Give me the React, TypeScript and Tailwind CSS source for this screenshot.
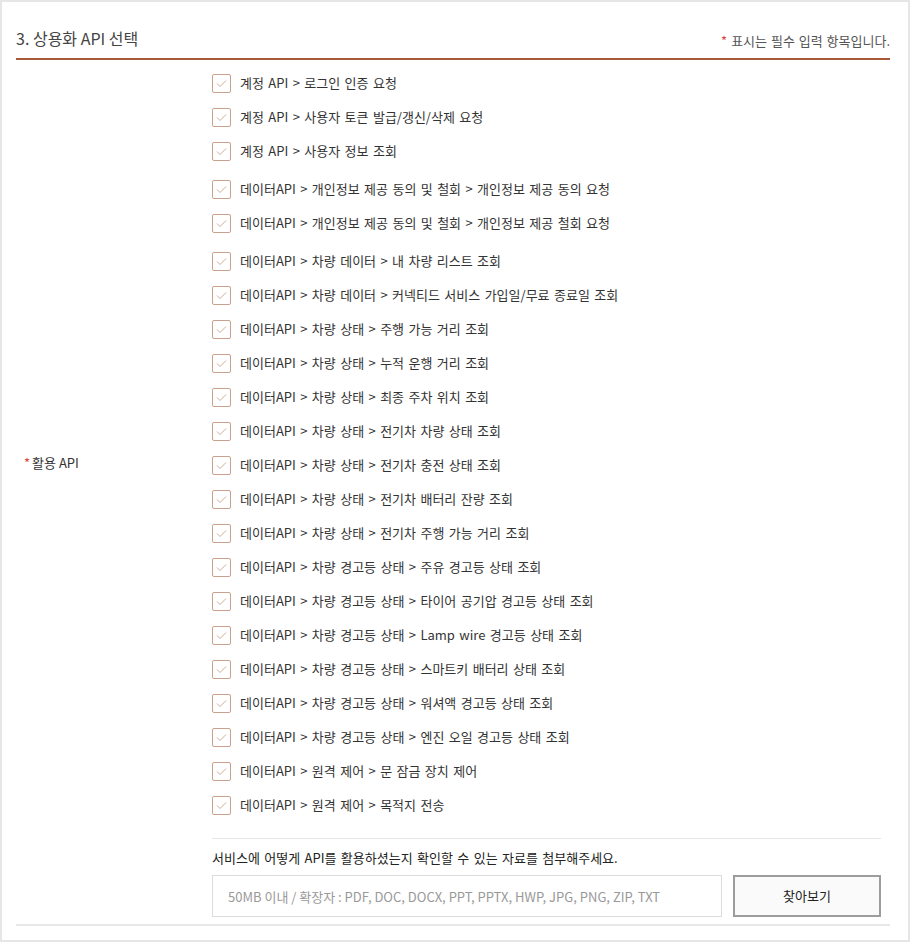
import React from "react";

const groups: string[][] = [
  ["계정 API > 로그인 인증 요청", "계정 API > 사용자 토큰 발급/갱신/삭제 요청", "계정 API > 사용자 정보 조회"],
  [
    "데이터API > 개인정보 제공 동의 및 철회 > 개인정보 제공 동의 요청",
    "데이터API > 개인정보 제공 동의 및 철회 > 개인정보 제공 철회 요청",
  ],
  [
    "데이터API > 차량 데이터 > 내 차량 리스트 조회",
    "데이터API > 차량 데이터 > 커넥티드 서비스 가입일/무료 종료일 조회",
    "데이터API > 차량 상태 > 주행 가능 거리 조회",
    "데이터API > 차량 상태 > 누적 운행 거리 조회",
    "데이터API > 차량 상태 > 최종 주차 위치 조회",
    "데이터API > 차량 상태 > 전기차 차량 상태 조회",
    "데이터API > 차량 상태 > 전기차 충전 상태 조회",
    "데이터API > 차량 상태 > 전기차 배터리 잔량 조회",
    "데이터API > 차량 상태 > 전기차 주행 가능 거리 조회",
    "데이터API > 차량 경고등 상태 > 주유 경고등 상태 조회",
    "데이터API > 차량 경고등 상태 > 타이어 공기압 경고등 상태 조회",
    "데이터API > 차량 경고등 상태 > Lamp wire 경고등 상태 조회",
    "데이터API > 차량 경고등 상태 > 스마트키 배터리 상태 조회",
    "데이터API > 차량 경고등 상태 > 워셔액 경고등 상태 조회",
    "데이터API > 차량 경고등 상태 > 엔진 오일 경고등 상태 조회",
    "데이터API > 원격 제어 > 문 잠금 장치 제어",
    "데이터API > 원격 제어 > 목적지 전송",
  ],
];

function CheckItem({ label }: { label: string }) {
  return (
    <label className="flex h-[34px] items-center gap-[9px] cursor-pointer">
      <span className="flex size-[19px] shrink-0 items-center justify-center rounded-[2px] border-[1.5px] border-[#c9a18d] bg-white">
        <svg width="13" height="13" viewBox="0 0 13 13" fill="none">
          <path d="M2 6.5 L5 9.5 L11 3.5" stroke="#cfa996" strokeWidth="1" />
        </svg>
      </span>
      <span className="text-[13px] text-[#333] [word-spacing:1.5px]">{label}</span>
    </label>
  );
}

export default function App() {
  return (
    <div
      className="box-border min-h-[942px] w-full border-2 border-[#e6e6e6] bg-white pl-[14px] pr-[18px] pb-[14px]"
      style={{ fontFamily: '"Noto Sans CJK KR", "Noto Sans", sans-serif' }}
    >
      <div className="flex items-start justify-between border-b-2 border-[#a65a35] pt-[26px] pb-[8px]">
        <h2 className="text-[16px] leading-[20px] font-normal text-[#444]">3. 상용화 API 선택</h2>
        <p className="mt-[4px] text-[13px] leading-[18px] text-[#555] [word-spacing:1px]">
          <span className="mr-[4px] text-[#e0443a]">*</span>표시는 필수 입력 항목입니다.
        </p>
      </div>

      <div className="flex border-b-2 border-[#e8e8e8] pb-[7px]">
        <div className="w-[196px] shrink-0 pl-[8px] pt-[394px] text-[13px] leading-[18px] text-[#333]">
          <span className="mr-[2px] text-[#e0443a]">*</span>활용 API
        </div>
        <div className="flex-1 pr-[9px] pt-[6px]">
          <div className="flex flex-col gap-[4px]">
            {groups.map((g, i) => (
              <div key={i} className="flex flex-col">
                {g.map((item) => (
                  <CheckItem key={item} label={item} />
                ))}
              </div>
            ))}
          </div>

          <div className="mt-[16px] border-t border-[#e6e6e6] pt-[10px]">
            <p className="text-[13px] leading-[18px] text-[#222] [word-spacing:1.5px]">
              서비스에 어떻게 API를 활용하셨는지 확인할 수 있는 자료를 첨부해주세요.
            </p>
            <div className="mt-[8px] flex gap-[11px]">
              <input
                readOnly
                placeholder="50MB 이내 / 확장자 : PDF, DOC, DOCX, PPT, PPTX, HWP, JPG, PNG, ZIP, TXT"
                className="h-[42px] w-[510px] border border-[#dcdcdc] px-[15px] text-[13px] text-[#333] placeholder:text-[#999] outline-none"
              />
              <button className="h-[42px] w-[148px] border-2 border-[#9c9c9c] bg-[#fafafa] text-[13px] text-[#222]">
                찾아보기
              </button>
            </div>
          </div>
        </div>
      </div>
    </div>
  );
}
